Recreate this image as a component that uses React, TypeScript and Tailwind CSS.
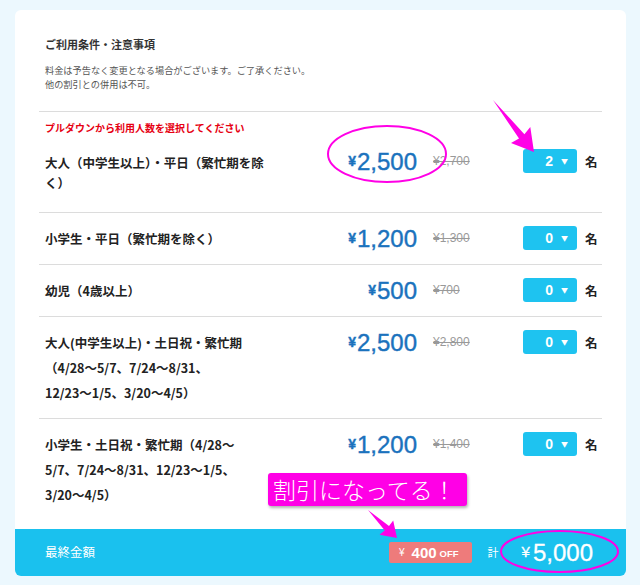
import { Fragment } from "react";

type Row = {
  lines: string[];
  price: string;
  old: string;
  qty: string;
};

const rows: Row[] = [
  { lines: ["小学生・平日（繁忙期を除く）"], price: "1,200", old: "¥1,300", qty: "0" },
  { lines: ["幼児（4歳以上）"], price: "500", old: "¥700", qty: "0" },
  {
    lines: ["大人(中学生以上)・土日祝・繁忙期", "（4/28〜5/7、7/24〜8/31、", "12/23〜1/5、3/20〜4/5）"],
    price: "2,500",
    old: "¥2,800",
    qty: "0",
  },
  {
    lines: ["小学生・土日祝・繁忙期（4/28〜", "5/7、7/24〜8/31、12/23〜1/5、", "3/20〜4/5）"],
    price: "1,200",
    old: "¥1,400",
    qty: "0",
  },
];

function Price({ value }: { value: string }) {
  return (
    <div className="w-[140px] h-[25px] shrink-0 flex items-center justify-end text-[#1b72bd] [-webkit-text-stroke:0.4px_#1b72bd] font-['Liberation_Sans',Arial,sans-serif]">
      <span className="text-[14px] leading-none font-bold mt-[-2px]">¥</span>
      <span className="ml-[1px] text-[24px] leading-none">{value}</span>
    </div>
  );
}

function Controls({ old, qty }: { old: string; qty: string }) {
  return (
    <>
      <div className="ml-[16px] w-[90px] h-[25px] shrink-0 leading-[25px] text-[12px] text-[#999] line-through font-['Liberation_Sans',Arial,sans-serif]">
        {old}
      </div>
      <div className="w-[54px] h-[24px] shrink-0 rounded-[3px] bg-[#1ec3f0] flex items-center justify-end gap-[8px] pr-[9px] text-white">
        <span className="text-[14px] leading-none font-bold font-['Liberation_Sans',Arial,sans-serif]">{qty}</span>
        <span className="text-[7px] leading-none">▼</span>
      </div>
      <div className="ml-[8px] h-[25px] leading-[25px] text-[12.5px] font-bold text-[#222]">名</div>
    </>
  );
}

export default function App() {
  return (
    <div className="relative w-[640px] h-[585px] overflow-hidden bg-[#ecf8fe] pt-[10px] pl-[15px] font-['Noto_Sans_CJK_JP',sans-serif]">
      <div className="w-[611px] h-[566px] bg-white rounded-[6px] overflow-hidden flex flex-col">
        {/* 注意事項 */}
        <div className="px-[30px] pt-[26px] pb-[20px]">
          <h2 className="text-[11px] leading-[16px] font-bold text-[#333]">ご利用条件・注意事項</h2>
          <p className="mt-[11px] text-[9.2px] leading-[14px] text-[#555]">
            料金は予告なく変更となる場合がございます。ご了承ください。
            <br />
            他の割引との併用は不可。
          </p>
        </div>

        <div className="mx-[24px] border-t border-[#dcdcdc]">
          {/* first row with the hint */}
          <div className="px-[6px] pt-[8px] pb-[19px]">
            <p className="text-[10px] leading-[15px] font-bold text-[#e60012]">プルダウンから利用人数を選択してください</p>
            <div className="mt-[14px] flex items-start">
              <div className="w-[232px] shrink-0 pt-[4px] text-[12.5px] leading-[20px] font-bold text-[#222]">
                <span className="block h-[20px] whitespace-nowrap">大人（中学生以上）・平日（繁忙期を除</span>
                <span className="block h-[20px] whitespace-nowrap">く）</span>
              </div>
              <Price value="2,500" />
              <Controls old="¥2,700" qty="2" />
            </div>
          </div>

          {rows.map((r, i) => (
            <div
              key={i}
              className={
                i === rows.length - 1
                  ? "border-t border-[#dcdcdc] px-[6px] pt-[13px] pb-[20px] flex items-start"
                  : "border-t border-[#dcdcdc] px-[6px] py-[13px] flex items-start"
              }
            >
              <div className="w-[232px] shrink-0 text-[12.5px] leading-[25px] font-bold text-[#222]">
                {r.lines.map((l, j) => (
                  <Fragment key={j}>
                    <span className="block h-[25px] whitespace-nowrap">{l}</span>
                  </Fragment>
                ))}
              </div>
              <Price value={r.price} />
              <Controls old={r.old} qty={r.qty} />
            </div>
          ))}
        </div>

        {/* 最終金額 */}
        <div className="mt-auto h-[47px] shrink-0 bg-[#1ac1ee] flex items-center pl-[30px] pr-[33px] text-white">
          <span className="text-[12.5px]">最終金額</span>
          <div className="ml-auto h-[21px] rounded-[2px] bg-[#ee7b7b] flex items-center pl-[10px] pr-[13px] font-['Liberation_Sans',Arial,sans-serif]">
            <span className="text-[10px] leading-none">¥</span>
            <span className="ml-[7px] text-[15px] font-bold leading-none">400</span>
            <span className="ml-[3px] mt-[2px] text-[9.5px] font-bold leading-none">OFF</span>
          </div>
          <span className="ml-[16px] text-[11px]">計</span>
          <div className="ml-[23px] flex items-center font-['Liberation_Sans',Arial,sans-serif] [-webkit-text-stroke:0.3px_white]">
            <span className="text-[15px] leading-none mt-[-2px]">¥</span>
            <span className="ml-[3px] text-[24px] leading-none">5,000</span>
          </div>
        </div>
      </div>

      {/* annotations */}
      <svg className="absolute inset-0 pointer-events-none" width="640" height="585" viewBox="0 0 640 585">
        <ellipse cx="387" cy="154" rx="59" ry="28" fill="none" stroke="#ff00e6" strokeWidth="2" />
        <ellipse cx="559.5" cy="551.5" rx="58.5" ry="20.5" fill="none" stroke="#ff00e6" strokeWidth="2" />
        <polygon points="493,100 524.4,134.2 530.3,127 534,152 511,143 519,138.6" fill="#ff00e6" />
        <polygon points="368,510 389,526 393.2,520.5 397,538 379.5,534.7 384.8,530.4" fill="#ff00e6" />
      </svg>
      <div className="absolute left-[268px] top-[473px] w-[199px] h-[33px] rounded-[3px] bg-[#ff00e6] shadow-[1px_2px_3px_rgba(0,0,0,0.3)] pl-[5px] text-[23px] leading-[33px] font-light text-white whitespace-nowrap">
        割引になってる！
      </div>
    </div>
  );
}
